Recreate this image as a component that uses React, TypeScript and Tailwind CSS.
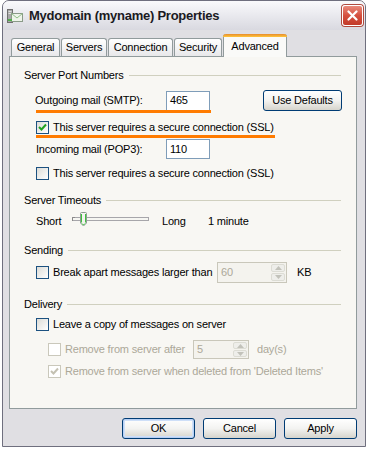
import React from "react";

const Check = ({ checked = false, disabled = false }: { checked?: boolean; disabled?: boolean }) => (
  <div
    className={
      "w-[13px] h-[13px] shrink-0 border flex items-center justify-center " +
      (disabled
        ? "border-[#cac8bb] bg-white"
        : "border-[#1c5180] bg-gradient-to-br from-[#dcdcd7] to-[#ffffff]")
    }
  >
    {checked && (
      <svg width="9" height="9" viewBox="0 0 9 9">
        <path
          d="M1 4 L3.5 6.5 L8 1.5"
          fill="none"
          stroke={disabled ? "#c4c1b2" : "#21a121"}
          strokeWidth="2"
        />
      </svg>
    )}
  </div>
);

const Header = ({ text, mt }: { text: string; mt: string }) => (
  <div className={"flex items-center h-[14px] pl-[14px] pr-[15px] " + mt}>
    <span className="whitespace-nowrap">{text}</span>
    <div className="flex-1 ml-[5px] h-[1px] bg-[#d0d0bf]" />
  </div>
);

const Spinner = ({ value, w, h }: { value: string; w: string; h: string }) => (
  <div className={"flex border border-[#c9c7ba] bg-[#f4f3ee] " + w + " " + h}>
    <div className="flex-1 pl-[3px] flex items-center text-[#aca899]">{value}</div>
    <div className="w-[16px] flex flex-col p-[1px] gap-[1px]">
      <div className="flex-1 rounded-[2px] bg-[#eeeeea] border border-[#dcdcd4] flex items-center justify-center">
        <svg width="7" height="4" viewBox="0 0 7 4">
          <path d="M0 4 L3.5 0 L7 4 Z" fill="#c2c2ba" />
        </svg>
      </div>
      <div className="flex-1 rounded-[2px] bg-[#eeeeea] border border-[#dcdcd4] flex items-center justify-center">
        <svg width="7" height="4" viewBox="0 0 7 4">
          <path d="M0 0 L3.5 4 L7 0 Z" fill="#c2c2ba" />
        </svg>
      </div>
    </div>
  </div>
);

const Btn = ({ label, w, def = false }: { label: string; w: string; def?: boolean }) => (
  <div
    className={
      "h-[21px] rounded-[3px] border border-[#003c74] bg-gradient-to-b from-[#ffffff] via-[#f3f3f1] to-[#d6d4cc] flex items-center justify-center " +
      w +
      (def ? " shadow-[inset_0_0_0_1px_#b8d0f4,inset_0_0_0_2px_#cedff8]" : "")
    }
  >
    {label}
  </div>
);

const Tab = ({ label, w, active = false }: { label: string; w: string; active?: boolean }) =>
  active ? (
    <div
      className={
        "relative z-10 h-[23px] -mb-[1px] border-x border-[#919b9c] bg-[#fafaf8] rounded-t-[3px] flex flex-col " + w
      }
    >
      <div className="h-[3px] -mx-[1px] rounded-t-[3px] bg-gradient-to-b from-[#e68b2c] to-[#ffc73c]" />
      <div className="flex-1 flex items-start justify-center pt-[1px]">{label}</div>
    </div>
  ) : (
    <div
      className={
        "h-[18px] border-x border-t border-[#919b9c] rounded-t-[3px] bg-gradient-to-b from-[#ffffff] to-[#e8e8ea] flex items-center justify-center " +
        w
      }
    >
      {label}
    </div>
  );

export default function App() {
  return (
    <div className="w-[367px] h-[450px] bg-white font-['Liberation_Sans',Arial,sans-serif] text-[11px] text-black tracking-[-0.2px] overflow-hidden">
      <div className="ml-[2px] w-[364px] h-[447px] border border-[#6f6f7e] rounded-t-[7px] bg-[#e0dfe3] flex flex-col">
        {/* Title bar */}
        <div className="h-[29px] rounded-t-[6px] bg-gradient-to-b from-[#fafafc] via-[#e9e9ee] to-[#d9d9e0] flex items-center pl-[4px] pr-[2px]">
          <svg width="16" height="16" viewBox="0 0 16 16" className="shrink-0">
            <rect x="0.5" y="1.5" width="5" height="13" fill="#a8a8a8" stroke="#707070" />
            <rect x="1.5" y="3" width="3" height="1" fill="#e0e0e0" />
            <rect x="1.5" y="5" width="3" height="1" fill="#e0e0e0" />
            <rect x="4.5" y="5.5" width="11" height="8" fill="#eef4ea" stroke="#8a9a88" />
            <path d="M4.5 5.5 L10 10 L15.5 5.5" fill="none" stroke="#8fbf88" />
            <rect x="1" y="11" width="4" height="2" fill="#4fb04a" />
          </svg>
          <span className="ml-[6px] text-[13px] font-bold tracking-[-0.25px] text-[#1a1a22]">Mydomain (myname) Properties</span>
          <div className="ml-auto w-[21px] h-[21px] rounded-[3px] border border-white bg-gradient-to-b from-[#e98a7c] via-[#d5503f] to-[#c23a2a] flex items-center justify-center shadow-[0_0_0_1px_#b04a3e]">
            <svg width="11" height="11" viewBox="0 0 11 11">
              <path d="M1.5 1.5 L9.5 9.5 M9.5 1.5 L1.5 9.5" stroke="white" strokeWidth="2.2" strokeLinecap="round" />
            </svg>
          </div>
        </div>

        {/* Body */}
        <div className="pl-[6px] pt-[4px]">
          {/* Tabs */}
          <div className="flex items-end h-[22px] pl-[2px] gap-[1px]">
            <Tab label="General" w="w-[49px]" />
            <Tab label="Servers" w="w-[46px]" />
            <Tab label="Connection" w="w-[65px]" />
            <Tab label="Security" w="w-[48px]" />
            <Tab label="Advanced" w="w-[64px]" active />
          </div>

          {/* Panel */}
          <div className="relative w-[348px] h-[353px] border border-[#919b9c] bg-[#f8f7f3] flex flex-col">
            <Header text="Server Port Numbers" mt="mt-[11px]" />

            {/* Outgoing */}
            <div className="mt-[8px] h-[21px] pl-[25px] flex items-center">
              <div className="w-[131px]">Outgoing mail (SMTP):</div>
              <div className="w-[44px] h-[20px] border border-[#7f9db9] bg-white pl-[3px] flex items-center">465</div>
              <div className="ml-[53px]">
                <Btn label="Use Defaults" w="w-[79px]" />
              </div>
            </div>

            {/* SSL checked */}
            <div className="mt-[10px] h-[13px] pl-[26px] flex items-center">
              <Check checked />
              <span className="ml-[4px]">This server requires a secure connection (SSL)</span>
            </div>

            {/* Incoming */}
            <div className="mt-[5px] h-[20px] pl-[26px] flex items-center">
              <div className="w-[130px]">Incoming mail (POP3):</div>
              <div className="w-[44px] h-[20px] border border-[#7f9db9] bg-white pl-[3px] flex items-center">110</div>
            </div>

            <div className="mt-[8px] h-[13px] pl-[26px] flex items-center">
              <Check />
              <span className="ml-[4px]">This server requires a secure connection (SSL)</span>
            </div>

            <Header text="Server Timeouts" mt="mt-[13px]" />

            {/* Slider */}
            <div className="mt-[4px] h-[20px] pl-[26px] flex items-center">
              <div className="w-[36px]">Short</div>
              <div className="w-[77px] h-[20px] flex items-center">
                <svg width="77" height="20" viewBox="0 0 77 20">
                  <rect x="0.5" y="6.5" width="76" height="3" fill="#f6f6f2" stroke="#a7a6aa" />
                  <path d="M0.5 10 L0.5 6.5 L3 6.5" stroke="#8a8a8a" fill="none" />
                  <path
                    d="M8.5 2.5 Q8.5 1.5 9.5 1.5 L13.5 1.5 Q14.5 1.5 14.5 2.5 L14.5 12 L11.5 15 L8.5 12 Z"
                    fill="#f4f4f0"
                    stroke="#8e9a94"
                  />
                  <path d="M9.5 3 L9.5 11.5 M13.5 3 L13.5 11.5" stroke="#3fc23f" strokeWidth="1" />
                  <path d="M10 12.5 L11.5 14 L13 12.5" stroke="#3fc23f" fill="none" />
                </svg>
              </div>
              <div className="ml-[13px] w-[46px]">Long</div>
              <div>1 minute</div>
            </div>

            <Header text="Sending" mt="mt-[12px]" />

            <div className="mt-[5px] h-[21px] pl-[26px] flex items-center">
              <Check />
              <span className="ml-[4px] w-[164px]">Break apart messages larger than</span>
              <Spinner value="60" w="w-[70px]" h="h-[21px]" />
              <span className="ml-[10px]">KB</span>
            </div>

            <Header text="Delivery" mt="mt-[14px]" />

            <div className="mt-[7px] h-[13px] pl-[26px] flex items-center">
              <Check />
              <span className="ml-[4px]">Leave a copy of messages on server</span>
            </div>

            <div className="mt-[9px] h-[19px] pl-[38px] flex items-center text-[#aca899]">
              <Check disabled />
              <span className="ml-[4px] w-[128px]">Remove from server after</span>
              <Spinner value="5" w="w-[56px]" h="h-[19px]" />
              <span className="ml-[8px]">day(s)</span>
            </div>

            <div className="mt-[6px] h-[13px] pl-[38px] flex items-center text-[#aca899]">
              <Check checked disabled />
              <span className="ml-[4px]">Remove from server when deleted from 'Deleted Items'</span>
            </div>

            {/* annotation underlines */}
            <div className="absolute left-[26px] top-[53px] w-[175px] h-[3px] bg-[#ff7b00]" />
            <div className="absolute left-[26px] top-[78px] w-[239px] h-[3px] bg-[#ff7b00]" />
          </div>

          {/* Buttons */}
          <div className="w-[348px] mt-[9px] flex justify-end gap-[8px]">
            <Btn label="OK" w="w-[73px]" def />
            <Btn label="Cancel" w="w-[73px]" />
            <Btn label="Apply" w="w-[73px]" />
          </div>
        </div>
      </div>
    </div>
  );
}
